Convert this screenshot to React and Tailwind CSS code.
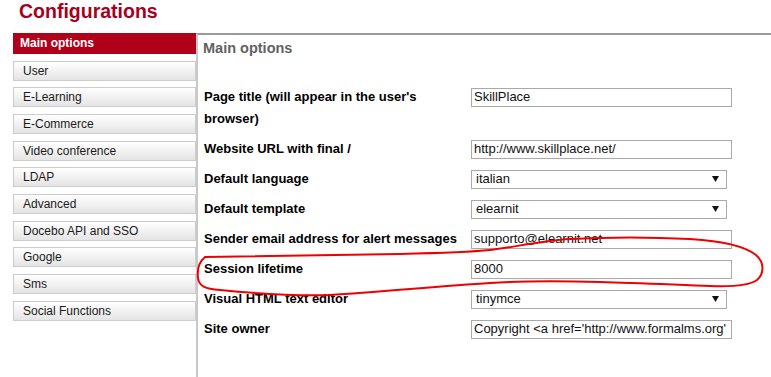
const tabs = [
  'User',
  'E-Learning',
  'E-Commerce',
  'Video conference',
  'LDAP',
  'Advanced',
  'Docebo API and SSO',
  'Google',
  'Sms',
  'Social Functions',
];

const fields = [
  { label: "Page title (will appear in the user's browser)", kind: 'text', value: 'SkillPlace' },
  { label: 'Website URL with final /', kind: 'text', value: 'http://www.skillplace.net/' },
  { label: 'Default language', kind: 'select', value: 'italian' },
  { label: 'Default template', kind: 'select', value: 'elearnit' },
  { label: 'Sender email address for alert messages', kind: 'text', value: 'supporto@elearnit.net' },
  { label: 'Session lifetime', kind: 'text', value: '8000' },
  { label: 'Visual HTML text editor', kind: 'select', value: 'tinymce' },
  {
    label: 'Site owner',
    kind: 'text',
    value: "Copyright <a href='http://www.formalms.org' target='_blank'>formalms.org</a>",
  },
];

// hand-drawn red loop around the session lifetime row
const scribble =
  'M205,257 C240,256 300,256 400,254 C440,253 470,252 490,250 C515,247 540,241 570,239 ' +
  'C610,237 650,237 690,239 C720,241 745,246 756,255 C765,263 764,274 757,280 ' +
  'C750,285 735,287 710,286 C680,285 640,283 600,282 C560,281 520,281 490,283 ' +
  'C440,286 380,292 330,295 C290,296 250,293 220,290 C205,289 199,286 198,278 ' +
  'C197,270 199,262 205,257';

function Field({ kind, value }) {
  if (kind === 'select') {
    return (
      <div className="w-[256px] h-[19px] border border-[#a9a9a9] bg-white flex items-center justify-between pl-[4px] pr-[7px] text-[13px] text-[#111]">
        <span>{value}</span>
        <svg width="7" height="6" viewBox="0 0 7 6">
          <polygon points="0,0 7,0 3.5,6" fill="#111" />
        </svg>
      </div>
    );
  }
  return (
    <input
      readOnly
      defaultValue={value}
      className="w-[261px] h-[19px] border border-[#a9a9a9] bg-white px-[2px] text-[13px] text-[#111] outline-none"
    />
  );
}

export default function App() {
  return (
    <div className="relative w-[771px] h-[377px] overflow-hidden bg-white font-['Liberation_Sans',Arial,sans-serif] flex flex-col">
      <h1 className="ml-[19px] h-[23px] leading-[23px] text-[19.5px] font-bold text-[#a8001c]">
        Configurations
      </h1>

      <div className="flex flex-1 mt-[10px] pl-[13px]">
        <div className="w-[183px] flex flex-col gap-[6.67px]">
          <div className="h-[21px] bg-[#b1001a] text-white text-[12px] font-bold leading-[21px] pl-[7px]">
            Main options
          </div>
          {tabs.map((t) => (
            <div
              key={t}
              className="h-[20px] border border-[#cdcdcd] bg-gradient-to-b from-white to-[#e4e4e4] text-[12px] leading-[18px] pl-[9px] text-[#1a1a1a]"
            >
              {t}
            </div>
          ))}
        </div>

        <div className="flex-1 border-t-2 border-l-2 border-t-[#9a9a9a] border-l-[#c8c8c8] pl-[5px]">
          <h2 className="pt-[3px] h-[23px] leading-[20px] text-[14.5px] font-bold text-[#626262]">
            Main options
          </h2>
          <div className="mt-[24px] grid grid-cols-[260px_auto] gap-x-[8px] items-start">
            {fields.map((f) => (
              <div key={f.label} className="contents">
                <div className="py-[4px] pl-[1px] leading-[22px] text-[13px] font-bold text-black">
                  {f.label}
                </div>
                <div className="py-[4px] h-[30px] flex items-center">
                  <Field kind={f.kind} value={f.value} />
                </div>
              </div>
            ))}
          </div>
        </div>
      </div>

      <svg
        className="absolute inset-0 pointer-events-none"
        width="771"
        height="377"
        viewBox="0 0 771 377"
      >
        <path d={scribble} fill="none" stroke="#ee0000" strokeWidth="2" strokeLinecap="round" />
      </svg>
    </div>
  );
}
